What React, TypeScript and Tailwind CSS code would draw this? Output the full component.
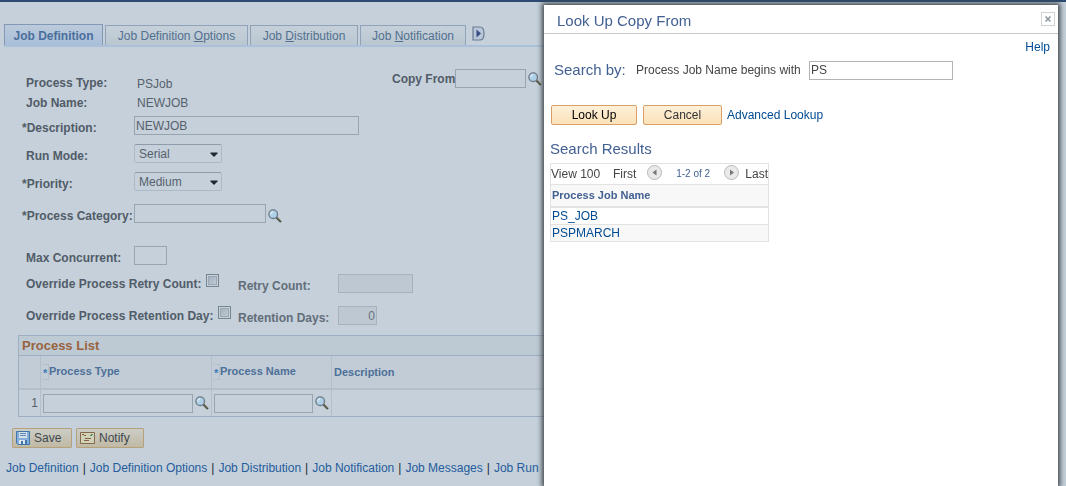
import { useState } from 'react';
import type { ReactNode } from 'react';

const tabs: { id: string; label: ReactNode; width: string }[] = [
  { id: 'definition', label: 'Job Definition', width: 'w-[99px]' },
  { id: 'options', label: <>Job Definition <u>O</u>ptions</>, width: 'w-[143px]' },
  { id: 'distribution', label: <>Job <u>D</u>istribution</>, width: 'w-[108px]' },
  { id: 'notification', label: <>Job <u>N</u>otification</>, width: 'w-[106px]' },
];

const footerLinks = [
  'Job Definition',
  'Job Definition Options',
  'Job Distribution',
  'Job Notification',
  'Job Messages',
  'Job Run',
];

const results = ['PS_JOB', 'PSPMARCH'];

const field = 'h-[19px] border border-[#98a4ae] bg-transparent px-px text-xs text-[#56616d] outline-none';
const disabledField = 'h-[19px] border border-[#a5b3c1] bg-[#bdc8d2] px-px text-right text-xs text-[#66717d]';
const label = 'shrink-0 whitespace-nowrap font-bold leading-[14px] text-[#515c68]';

function SearchIcon() {
  return (
    <svg width="14" height="14" viewBox="0 0 14 14" fill="none">
      <path d="M8.4 8.4l4.600 4.600" stroke="#4d5247" strokeWidth="2.2" />
      <path d="M9.200 8.400l4 4" stroke="#a39a72" strokeWidth="0.8" />
      <circle cx="5.2" cy="5.2" r="4.3" fill="#aed0e8" stroke="#6c7985" strokeWidth="1.3" />
      <path d="M2.800 5.500a2.500 2.500 0 0 1 2.400-2.700" stroke="#dbe9f3" strokeWidth="1.5" />
    </svg>
  );
}

function LookupButton({ name }: { name: string }) {
  return (
    <button type="button" aria-label={`Look up ${name}`} className="ml-0.5 shrink-0">
      <SearchIcon />
    </button>
  );
}

function SelectField({ id, options }: { id: string; options: string[] }) {
  return (
    <div className="relative">
      <select
        id={id}
        className="block h-[19px] w-[88px] appearance-none rounded-[2px] border border-[#acbac8] border-t-[#8d9baa] bg-transparent px-1 text-xs text-[#56616d] outline-none"
      >
        {options.map((option) => (
          <option key={option}>{option}</option>
        ))}
      </select>
      <svg className="pointer-events-none absolute right-1 top-2" width="8" height="5" viewBox="0 0 8 5">
        <path d="M.5.5h7v1L4 5 .5 1.500z" fill="#1f292f" />
      </svg>
    </div>
  );
}

function Checkbox({ id }: { id: string }) {
  return (
    <input
      id={id}
      type="checkbox"
      className="size-[13px] shrink-0 appearance-none self-start border border-[#778591] bg-linear-to-br from-[#9eabb9] to-[#c6d0da] shadow-[inset_0_0_0_1px_#c6d0d9,inset_0_0_0_2px_#9aa8b5] checked:bg-[#4b6f99]"
    />
  );
}

function TabBar() {
  const [active, setActive] = useState('definition');

  return (
    <div className="ml-1 mr-5 flex h-6 items-end gap-0.5 border-b-2 border-[#abc1d9]">
      {tabs.map((tab) => (
        <button
          key={tab.id}
          type="button"
          onClick={() => setActive(tab.id)}
          className={`${tab.width} ${
            active === tab.id
              ? 'h-[21px] border border-b-0 border-[#8299b5] bg-linear-to-b from-[#bccadb] to-[#a9bfd9] pt-px font-bold text-[#4a6f9c]'
              : 'h-5 border border-b-0 border-[#8fa2b7] bg-linear-to-b from-[#c5d0da] to-[#bac7d1] text-[#52708f]'
          }`}
        >
          {tab.label}
        </button>
      ))}
      <button type="button" aria-label="Show next tabs" className="mb-1 ml-1">
        <svg width="13" height="15" viewBox="0 0 13 15" fill="none">
          <path d="M1 1h7c2.500 0 4 2 4 6.500S10.500 14 8 14H1z" fill="#b9c6d8" stroke="#6a7d93" strokeWidth="1.2" />
          <path d="M4.500 3.500v8L9 7.500z" fill="#394a86" />
        </svg>
      </button>
    </div>
  );
}

function JobForm() {
  return (
    <form className="pl-[26px] pt-[22px]">
      <div className="flex h-6">
        <span className={`${label} w-[111px] pt-[7px]`}>Process Type:</span>
        <span className="w-[255px] pt-2 leading-[14px]">PSJob</span>
        <div className="flex h-[19px] items-center">
          <label htmlFor="copyFrom" className={`${label} w-[63px]`}>Copy From</label>
          <input id="copyFrom" className={`${field} w-[71px]`} />
          <LookupButton name="copy from" />
        </div>
      </div>
      <div className="flex h-5 items-center">
        <span className={`${label} w-[111px]`}>Job Name:</span>
        <span>NEWJOB</span>
      </div>

      <div className="mt-[3px] flex items-end">
        <label htmlFor="description" className={`${label} -ml-1 w-28`}>*Description:</label>
        <input id="description" defaultValue="NEWJOB" className={`${field} w-[225px]`} />
      </div>
      <div className="mt-[9px] flex items-end">
        <label htmlFor="runMode" className={`${label} w-[108px]`}>Run Mode:</label>
        <SelectField id="runMode" options={['Serial', 'Parallel']} />
      </div>
      <div className="mt-[9px] flex items-end">
        <label htmlFor="priority" className={`${label} -ml-1 w-28`}>*Priority:</label>
        <SelectField id="priority" options={['Medium', 'High', 'Low']} />
      </div>
      <div className="mt-[13px] flex items-end">
        <label htmlFor="category" className={`${label} -ml-1 w-28`}>*Process Category:</label>
        <input id="category" className={`${field} w-[132px]`} />
        <LookupButton name="process category" />
      </div>
      <div className="mt-[23px] flex items-end">
        <label htmlFor="maxConcurrent" className={`${label} w-[108px]`}>Max Concurrent:</label>
        <input id="maxConcurrent" className={`${field} w-[33px]`} />
      </div>

      <div className="mt-[9px] flex items-center">
        <label htmlFor="overrideRetry" className={`${label} w-[180px]`}>Override Process Retry Count:</label>
        <Checkbox id="overrideRetry" />
        <label htmlFor="retryCount" className={`${label} ml-[19px] w-[100px] self-end text-[#626d79]`}>Retry Count:</label>
        <input id="retryCount" disabled className={`${disabledField} w-[75px]`} />
      </div>
      <div className="mt-[13px] flex items-center">
        <label htmlFor="overrideRetention" className={`${label} w-48`}>Override Process Retention Day:</label>
        <Checkbox id="overrideRetention" />
        <label htmlFor="retentionDays" className={`${label} ml-[7px] w-[100px] self-end text-[#626d79]`}>Retention Days:</label>
        <input id="retentionDays" disabled defaultValue="0" className={`${disabledField} w-[39px]`} />
      </div>
    </form>
  );
}

function Required() {
  return (
    <abbr
      title="required"
      className="inline-block h-4 w-[6px] border-y border-r border-[#b3bfca] align-middle leading-4 text-[#3a7bbb] no-underline"
    >
      *
    </abbr>
  );
}

function ProcessList() {
  return (
    <div className="mt-[10px] pl-[18px] pr-5">
      <table className="w-full table-fixed border-separate border-spacing-0 border border-[#9dafc1]">
        <caption className="h-5 border border-b-0 border-[#9dafc1] bg-[#bdcad3] pl-[3px] text-left text-[13px] font-bold leading-5 text-[#99633f]">
          Process List
        </caption>
        <thead className="h-[34px] bg-[#c2ccd6] text-left text-[11px] text-[#4d7098]">
          <tr>
            <th className="w-[22px] border-b-2 border-r border-[#b3c0cc] p-0" />
            <th className="w-[171px] border-b-2 border-r border-[#b3c0cc] p-0 pl-0.5">
              <Required />Process Type
            </th>
            <th className="w-[120px] border-b-2 border-r border-[#b3c0cc] p-0 pl-0.5">
              <Required />Process Name
            </th>
            <th className="border-b-2 border-[#b3c0cc] p-0 pl-0.5">Description</th>
          </tr>
        </thead>
        <tbody>
          <tr className="h-[26px]">
            <td className="border-r border-[#b3c0cc] p-0 pr-0.5 text-right">1</td>
            <td className="border-r border-[#b3c0cc] p-0 pl-0.5">
              <div className="flex items-center">
                <input aria-label="Process Type" className={`${field} w-[150px]`} />
                <LookupButton name="process type" />
              </div>
            </td>
            <td className="border-r border-[#b3c0cc] p-0 pl-0.5">
              <div className="flex items-center">
                <input aria-label="Process Name" className={`${field} w-[99px]`} />
                <LookupButton name="process name" />
              </div>
            </td>
            <td className="p-0" />
          </tr>
        </tbody>
      </table>
    </div>
  );
}

function PageActions() {
  const button =
    'flex h-5 items-center gap-1 rounded-[1px] border border-[#b6a17e] bg-linear-to-b from-[#cccdc6] to-[#c0b9a4] px-[3px] text-[#3d4750]';

  return (
    <div className="mt-[11px] flex gap-1 pl-3">
      <button type="button" className={`${button} w-[60px]`}>
        <svg width="14" height="14" viewBox="0 0 14 14" fill="none">
          <path d="M.5.5h13v13H2L.5 12z" fill="#86aed9" stroke="#3f76ad" />
          <path d="M3 1h8v6H3z" fill="#d5e2ec" />
          <path d="M4 2.500h6M4 4.500h6" stroke="#5a88b8" />
          <path d="M3 9h8v4H3z" fill="#dce6ec" />
          <path d="M5 10h2v3H5zM9 9h2v4H9z" fill="#3f76ad" />
        </svg>
        Save
      </button>
      <button type="button" className={`${button} w-[68px]`}>
        <svg width="15" height="12" viewBox="0 0 15 12" fill="none">
          <path d="M.5.5h14v11H.5z" fill="#d0d2b9" stroke="#85694d" />
          <path d="M2 2.500h2M4 3.500h2M5 6.500h6M4 8.500h5" stroke="#8b6040" />
          <path d="M11 2.500h2M10 3.500h2" stroke="#4f9462" />
        </svg>
        Notify
      </button>
    </div>
  );
}

function PagerIcon({ path }: { path: string }) {
  return (
    <svg width="15" height="15" viewBox="0 0 15 15">
      <circle cx="7.5" cy="7.5" r="7" fill="#e9e9e9" stroke="#b9b9b9" />
      <path d={path} fill="#777777" />
    </svg>
  );
}

function LookupDialog() {
  const button =
    'h-5 rounded-[2px] border border-[#d9a066] bg-linear-to-b from-[#fef0d9] to-[#fbe2b8] text-xs';

  return (
    <div
      role="dialog"
      aria-labelledby="lookupTitle"
      className="fixed bottom-0 right-2 top-[5px] w-full max-w-[514px] overflow-y-auto bg-white text-xs text-[#444444] shadow-[0_0_5px_2px_#3c4248]"
    >
      <div className="flex h-[29px] items-center justify-between border-b border-[#c8c8c8] pl-[13px] pr-[3px]">
        <h2 id="lookupTitle" className="pt-1 text-[15px] leading-5 text-[#426092]">Look Up Copy From</h2>
        <button type="button" aria-label="Close" className="flex size-[14px] items-center justify-center border border-[#cfd3d6]">
          <svg width="8" height="8" viewBox="0 0 8 8" fill="none">
            <path d="M1.500 1.500l5 5M6.500 1.500l-5 5" stroke="#8d989f" strokeWidth="1.6" />
          </svg>
        </button>
      </div>

      <div className="flex justify-end pr-2 pt-[5px]">
        <a href="#help" className="leading-4 text-[#004b91]">Help</a>
      </div>

      <div className="px-[6px]">
        <div className="mt-[5px] flex items-center pl-1">
          <span className="w-[82px] text-[15px] leading-5 text-[#426092]">Search by:</span>
          <label htmlFor="jobName" className="w-[173px] whitespace-nowrap">Process Job Name begins with</label>
          <input
            id="jobName"
            defaultValue="PS"
            className="h-[19px] w-36 border border-[#b3b3b3] px-px text-xs outline-none"
          />
        </div>

        <div className="mt-[25px] flex items-center pl-px">
          <button type="button" className={`${button} w-[86px] text-black`}>Look Up</button>
          <button type="button" className={`${button} ml-[6px] w-[79px] text-[#333333]`}>Cancel</button>
          <a href="#advanced" className="ml-[5px] text-[#004b91]">Advanced Lookup</a>
        </div>

        <h3 className="mt-[14px] text-[15px] leading-5 text-[#426092]">Search Results</h3>
        <div className="mt-1 w-[219px] border border-[#e2e2e2]">
          <div className="flex h-5 items-center">
            <a href="#all" className="w-[62px]">View 100</a>
            <span className="w-[34px]">First</span>
            <button type="button" aria-label="Previous" className="mb-1">
              <PagerIcon path="M9.500 4.500v6l-4-3z" />
            </button>
            <span className="flex-1 text-center text-[10px] text-[#426092]">1-2 of 2</span>
            <button type="button" aria-label="Next" className="mb-1">
              <PagerIcon path="M6 4.500v6l4-3z" />
            </button>
            <span className="pl-[6px]">Last</span>
          </div>
          <table className="w-full border-collapse">
            <thead>
              <tr className="h-[22px] border-b-2 border-t border-[#e2e2e2] bg-[#f8f8f8] text-left text-[11px] text-[#426092]">
                <th className="p-0 pl-px">Process Job Name</th>
              </tr>
            </thead>
            <tbody>
              {results.map((name) => (
                <tr key={name} className="h-[17px] border-b border-[#e2e2e2] last:border-b-0 even:bg-[#f8f8f8]">
                  <td className="p-0 pl-px leading-4">
                    <a href={`#${name}`} className="text-[#004b91]">{name}</a>
                  </td>
                </tr>
              ))}
            </tbody>
          </table>
        </div>
      </div>
    </div>
  );
}

export default function App() {
  return (
    <div className="min-h-screen overflow-hidden border-t-2 border-[#2c4a72] bg-[#c5d0da] font-['Liberation_Sans',Arial,sans-serif] text-xs text-[#56616d]">
      <div className="pt-[21px]">
        <TabBar />
      </div>
      <JobForm />
      <ProcessList />
      <PageActions />
      <nav className="mt-3 flex gap-1 whitespace-nowrap pl-[6px] text-[#222b33]">
        {footerLinks.map((link, idx) => (
          <span key={link} className="flex gap-1">
            {idx > 0 && <span>|</span>}
            <a href="#page" className="text-[#245c9c]">{link}</a>
          </span>
        ))}
      </nav>
      <LookupDialog />
    </div>
  );
}
